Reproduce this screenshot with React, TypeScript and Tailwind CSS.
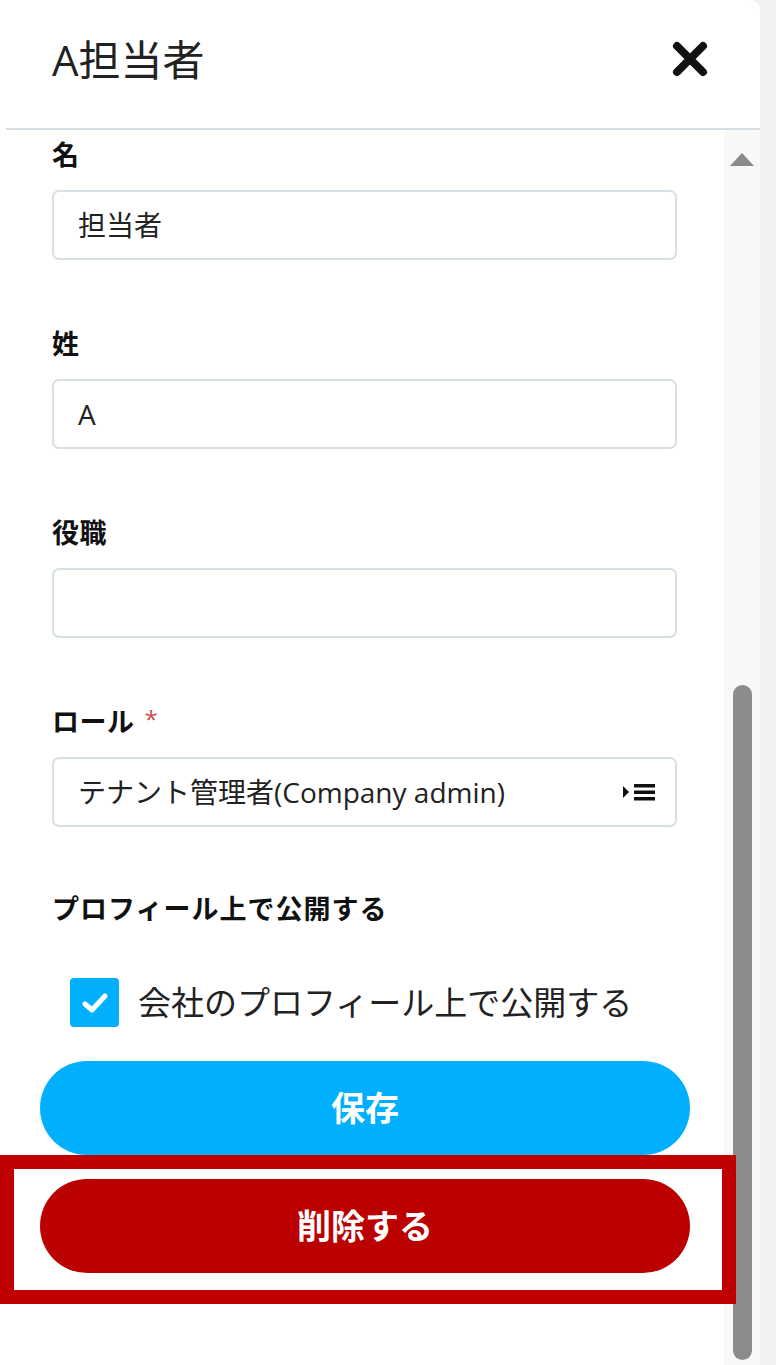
import React from "react";

const font = { fontFamily: '"Open Sans", "Noto Sans CJK JP", sans-serif' };

function Field({ label, value, required, select }: { label: string; value?: string; required?: boolean; select?: boolean }) {
  return (
    <div className="ml-[52px] w-[625px] mb-[66px]">
      <div className="h-[36px] leading-[36px] text-[27px] tracking-[0.5px] font-bold text-[#111] flex items-center">
        <span>{label}</span>
        {required && <span className="ml-[10px] text-[24px] font-normal text-[#d04a4a] -mt-[6px]">*</span>}
      </div>
      <div className="mt-[17px] h-[70px] border-2 border-[#d6e0e5] rounded-[7px] flex items-center pl-[24px] pr-[18px] text-[28px] text-[#222]">
        <span className="flex-1 whitespace-nowrap">{value}</span>
        {select && (
          <svg width="34" height="22" viewBox="0 0 34 22">
            <polygon points="0,5 6,11 0,17" fill="#111" />
            <rect x="11" y="3" width="21" height="3.5" fill="#111" />
            <rect x="11" y="9.5" width="21" height="3.5" fill="#111" />
            <rect x="11" y="16" width="21" height="3.5" fill="#111" />
          </svg>
        )}
      </div>
    </div>
  );
}

export default function App() {
  return (
    <div className="w-[776px] h-[1365px] bg-[#f2f2f2] flex overflow-hidden" style={font}>
      <div className="w-[760px] h-full bg-white rounded-tr-[10px] flex flex-col">
        <div className="h-[130px] shrink-0 border-b-2 border-[#d5dfe3] ml-[6px] flex items-center justify-between pl-[46px] pr-[52px] pb-[10px]">
          <span className="text-[42px] text-[#222] font-normal tracking-[0px]">A担当者</span>
          <svg width="36" height="36" viewBox="0 0 36 36">
            <path d="M5 5 L31 31 M31 5 L5 31" stroke="#111" strokeWidth="8" strokeLinecap="round" />
          </svg>
        </div>
        <div className="flex-1 flex min-h-0">
          <div className="w-[724px] min-w-0 shrink-0 pt-[7px] relative z-10">
            <Field label="名" value="担当者" />
            <Field label="姓" value="A" />
            <Field label="役職" value="" />
            <Field label="ロール" value="テナント管理者(Company admin)" required select />
            <div className="ml-[52px] h-[36px] leading-[36px] text-[27px] tracking-[1px] font-bold text-[#111] -mt-[2px] whitespace-nowrap">プロフィール上で公開する</div>
            <div className="ml-[70px] mt-[51px] flex items-center h-[49px]">
              <div className="w-[49px] h-[49px] rounded-[4px] bg-[#00b0ff] flex items-center justify-center shrink-0">
                <svg width="28" height="24" viewBox="0 0 28 24">
                  <path d="M4 13 L11 19 L24 5" stroke="#fff" strokeWidth="5" fill="none" strokeLinecap="round" strokeLinejoin="round" />
                </svg>
              </div>
              <span className="ml-[19px] text-[33px] text-[#222] whitespace-nowrap">会社のプロフィール上で公開する</span>
            </div>
            <button className="ml-[40px] mt-[34px] w-[650px] h-[94px] rounded-full bg-[#00b0ff] text-white text-[34px] font-bold block">
              保存
            </button>
            <div className="w-[736px] h-[149px] border-[14px] border-[#c00000] pt-[10px]">
              <button className="ml-[26px] w-[650px] h-[94px] rounded-full bg-[#bb0000] text-white text-[34px] font-bold block">
                削除する
              </button>
            </div>
          </div>
          <div className="w-[36px] shrink-0 bg-[#f8f8f8] flex flex-col items-center pt-[23px]">
            <svg width="24" height="13" viewBox="0 0 24 13">
              <polygon points="12,0 24,13 0,13" fill="#8a8a8a" />
            </svg>
            <div className="mt-[519px] w-[19px] flex-1 mb-[5px] rounded-full bg-[#8c8c8c]" />
          </div>
        </div>
      </div>
    </div>
  );
}
